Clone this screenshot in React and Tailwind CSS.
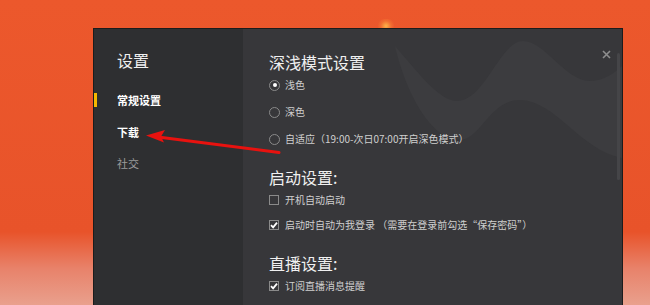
import React from 'react';

const cjk = { fontFamily: '"Noto Sans CJK SC", "Noto Sans", sans-serif' };

const Radio = ({ checked, label }) => (
  <div className="flex items-center h-[14px] text-[10px] leading-[14px] text-[#cfcfcf]">
    <span className="w-[11px] h-[11px] rounded-full border border-[#8a8a8a] flex items-center justify-center mr-[5px]">
      {checked && <span className="w-[4px] h-[4px] rounded-full bg-white" />}
    </span>
    {label}
  </div>
);

const Checkbox = ({ checked, label }) => (
  <div className="flex items-center h-[14px] text-[10px] leading-[14px] text-[#cfcfcf]">
    <span className="w-[10px] h-[10px] border border-[#8a8a8a] flex items-center justify-center mr-[6px]">
      {checked && (
        <svg width="8" height="8" viewBox="0 0 8 8">
          <path d="M1 4.2 L3.1 6.3 L7 1.6" stroke="#fff" strokeWidth="1.8" fill="none" />
        </svg>
      )}
    </span>
    {label}
  </div>
);

const Heading = ({ children, className = '' }) => (
  <div className={`h-[22px] text-[16px] leading-[22px] text-[#f0f0f0] ${className}`}>{children}</div>
);

const App = () => {
  return (
    <div
      className="relative w-[650px] h-[305px] overflow-hidden bg-[linear-gradient(180deg,#ec582c_0%,#e8532a_76%,#e8826a_88%,#e9a08d_100%)] pt-[28px] pl-[93px]"
      style={cjk}
    >
      {/* top glow */}
      <div className="absolute left-[377px] top-[19px] w-[18px] h-[14px] rounded-full bg-[radial-gradient(circle,#ffb347_0%,rgba(255,150,60,0.35)_45%,rgba(236,88,44,0)_75%)]" />

      <div className="relative w-[530px] h-[290px] border border-[#1c1c1c] flex">
        {/* sidebar */}
        <div className="w-[149px] bg-[#2e2f31] pt-[20px] pl-[23px] flex flex-col">
          <Heading>设置</Heading>
          <div className="relative mt-[22px] h-[14px] text-[11px] leading-[14px] font-bold text-white">
            <span className="absolute left-[-23px] top-0 w-[3px] h-[14px] bg-[#f5b800]" />
            常规设置
          </div>
          <div className="mt-[18px] h-[14px] text-[11px] leading-[14px] font-bold text-white">下载</div>
          <div className="mt-[17px] h-[14px] text-[11px] leading-[14px] text-[#9b9b9b]">社交</div>
        </div>

        {/* main */}
        <div className="relative flex-1 bg-[#37373a] overflow-hidden pt-[22px] pl-[26px]">
          <svg className="absolute left-0 top-0" width="379" height="288" viewBox="0 0 379 288">
            <path
              d="M152,17 C177,46 197,72 214,72 C242,72 257,12 280,12 C302,12 322,52 347,52 C362,52 372,43 379,37 L379,129 C337,121 312,71 277,71 C247,71 237,111 217,111 C187,111 162,61 152,17 Z"
              fill="#3c3c3f"
            />
          </svg>

          <div className="absolute right-[11px] top-[21px]">
            <svg width="9" height="9" viewBox="0 0 9 9">
              <path d="M1 1 L8 8 M8 1 L1 8" stroke="#8e8e8e" strokeWidth="1.6" />
            </svg>
          </div>
          <div className="absolute right-[2px] top-[24px] w-[3px] h-[127px] rounded-full bg-[#454548]" />

          <div className="relative flex flex-col">
            <Heading>深浅模式设置</Heading>
            <div className="mt-[5px]"><Radio checked label="浅色" /></div>
            <div className="mt-[13px]"><Radio label="深色" /></div>
            <div className="mt-[13px]"><Radio label="自适应（19:00-次日07:00开启深色模式）" /></div>
            <Heading className="mt-[20px]">启动设置:</Heading>
            <div className="mt-[5px]"><Checkbox label="开机自动启动" /></div>
            <div className="mt-[11px]"><Checkbox checked label="启动时自动为我登录 （需要在登录前勾选“保存密码”）" /></div>
            <Heading className="mt-[20px]">直播设置:</Heading>
            <div className="mt-[5px]"><Checkbox checked label="订阅直播消息提醒" /></div>
          </div>
        </div>
      </div>

      {/* red arrow annotation */}
      <svg className="absolute left-0 top-0 pointer-events-none" width="650" height="305" viewBox="0 0 650 305">
        <path d="M279 152.5 L158 137" stroke="#e8120f" strokeWidth="3" strokeLinecap="round" />
        <path d="M146 135.5 L165 130 L161 136.5 L164 142.5 Z" fill="#e8120f" />
      </svg>
    </div>
  );
};

export default App;
